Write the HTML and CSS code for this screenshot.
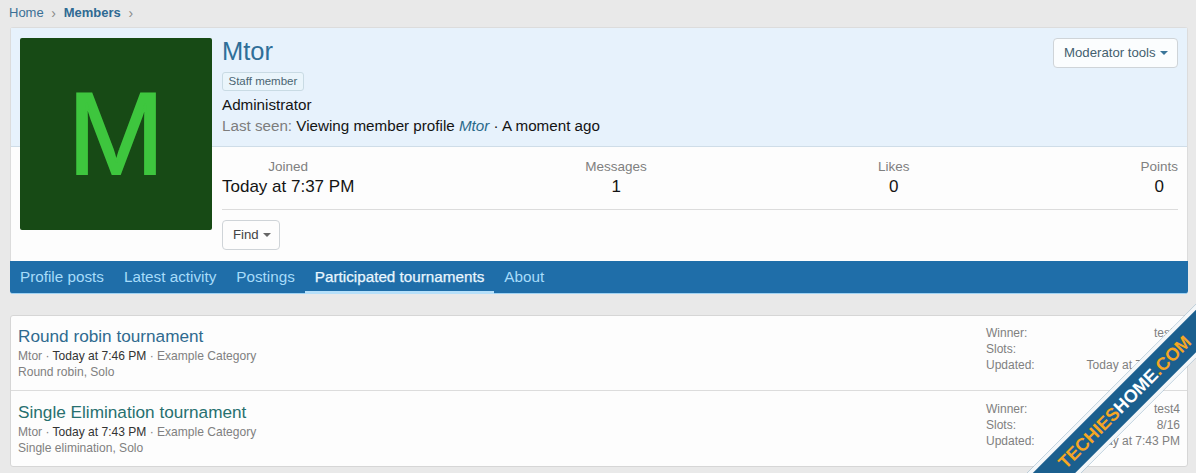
FILE: index.html
```html
<!DOCTYPE html>
<html lang="en">
<head>
<meta charset="utf-8">
<title>Mtor</title>
<link rel="stylesheet" href="styles.css">
</head>
<body>
<nav class="crumbs">
  <a class="crumb" href="#">Home</a><span class="sep">›</span>
  <a class="crumb current" href="#">Members</a><span class="sep">›</span>
</nav>

<section class="profile">
  <div class="avatar">M</div>
  <header class="banner">
    <div class="identity">
      <h1 class="name">Mtor</h1>
      <div class="badge-line"><span class="badge">Staff member</span></div>
      <div class="role">Administrator</div>
      <div class="seen"><span class="muted">Last seen:</span> Viewing member profile <a class="seen-link" href="#">Mtor</a> · A moment ago</div>
    </div>
    <button class="btn btn-mod">Moderator tools<span class="caret"></span></button>
  </header>
  <div class="details">
    <dl class="stats">
      <div class="stat"><dt>Joined</dt><dd>Today at 7:37 PM</dd></div>
      <div class="stat"><dt>Messages</dt><dd>1</dd></div>
      <div class="stat"><dt>Likes</dt><dd>0</dd></div>
      <div class="stat"><dt>Points</dt><dd>0</dd></div>
    </dl>
    <div class="actions"><button class="btn btn-find">Find<span class="caret"></span></button></div>
  </div>
  <div class="tabs">
    <a class="tab" href="#">Profile posts</a>
    <a class="tab" href="#">Latest activity</a>
    <a class="tab" href="#">Postings</a>
    <a class="tab active" href="#">Participated tournaments</a>
    <a class="tab" href="#">About</a>
  </div>
</section>

<section class="list">
  <article class="row">
    <div class="main">
      <h2 class="title">Round robin tournament</h2>
      <div class="meta">Mtor · <span class="dark">Today at 7:46 PM</span> · Example Category</div>
      <div class="meta">Round robin, Solo</div>
    </div>
    <dl class="facts">
      <div class="fact"><dt>Winner:</dt><dd>test4</dd></div>
      <div class="fact"><dt>Slots:</dt><dd>4/8</dd></div>
      <div class="fact"><dt>Updated:</dt><dd>Today at 7:46 PM</dd></div>
    </dl>
  </article>
  <article class="row">
    <div class="main">
      <h2 class="title title-alt">Single Elimination tournament</h2>
      <div class="meta">Mtor · <span class="dark">Today at 7:43 PM</span> · Example Category</div>
      <div class="meta">Single elimination, Solo</div>
    </div>
    <dl class="facts">
      <div class="fact"><dt>Winner:</dt><dd>test4</dd></div>
      <div class="fact"><dt>Slots:</dt><dd>8/16</dd></div>
      <div class="fact"><dt>Updated:</dt><dd>Today at 7:43 PM</dd></div>
    </dl>
  </article>
</section>

<div class="overlay">
  <div class="ribbon"><span class="orange">TECHIES</span><span class="white">HOME</span><span class="orange">.COM</span></div>
</div>
</body>
</html>
```

FILE: styles.css
```css
* { box-sizing: border-box; }
html, body { height: 100%; }
html { overflow: hidden; }
body {
  margin: 0;
  padding: 0 8px 0 10px;
  background: #e9e9e9;
  font-family: "Liberation Sans", Arial, sans-serif;
  font-size: 15.2px;
  color: #141414;
  overflow: hidden;
  position: relative;
}
a { text-decoration: none; color: inherit; }
h1, h2, dl, dd { margin: 0; }

.crumbs {
  height: 27px;
  display: flex;
  align-items: center;
  font-size: 13px;
  color: #3b6f95;
  margin-left: -1px;
  padding-bottom: 2px;
}
.crumb.current { font-weight: bold; color: #2f6a93; }
.sep { color: #8a8a8a; margin: 0 7px; font-size: 14px; width: 6px; text-align: center; }

.profile {
  position: relative;
  height: 267px;
  display: flex;
  flex-direction: column;
  background: #fdfdfd;
  border: 1px solid #dcdcdc;
  border-bottom: none;
  border-radius: 3px;
}
.avatar {
  position: absolute;
  left: 9px;
  top: 10px;
  width: 192px;
  height: 192px;
  background: #174a15;
  color: #3ec63e;
  border-radius: 2px;
  display: flex;
  align-items: center;
  justify-content: center;
  font-size: 116px;
  line-height: 1;
  -webkit-text-stroke: 2px #3ec63e;
}
.banner {
  height: 119px;
  padding: 10px 9px 0 211px;
  background: #e7f2fc;
  border-bottom: 1px solid #cfdde8;
  display: flex;
  justify-content: space-between;
  align-items: flex-start;
}
.name {
  font-size: 25.5px;
  font-weight: normal;
  line-height: 26px;
  color: #2f6f99;
}
.badge-line { margin-top: 8px; height: 19px; display: flex; }
.badge {
  font-size: 11.5px;
  line-height: 17px;
  padding: 0 5.5px;
  color: #4a6572;
  background: #eaf5fb;
  border: 1px solid #c9dbe4;
  border-radius: 3px;
}
.role { margin-top: 3px; line-height: 21px; }
.seen { line-height: 21px; }
.muted { color: #7d7d7d; }
.seen-link { font-style: italic; color: #2b6a8b; }

.btn {
  display: inline-flex;
  align-items: center;
  font: inherit;
  font-size: 13.2px;
  height: 30px;
  padding: 0 10px 2px;
  color: #43606e;
  background: #fbfdfe;
  border: 1px solid #cfd4d8;
  border-radius: 4px;
  white-space: nowrap;
}
.btn-mod { width: 125px; }
.btn-find { width: 58px; height: 30px; color: #444; background: #fdfdfd; }
.caret {
  width: 0;
  height: 0;
  margin-left: 4px;
  margin-top: 1px;
  border-left: 4px solid transparent;
  border-right: 4px solid transparent;
  border-top: 4px solid #3a7599;
}
.btn-find .caret { border-top-color: #666; }

.details {
  height: 114px;
  padding: 10px 9px 0 211px;
}
.stats {
  height: 53px;
  display: flex;
  justify-content: space-between;
  border-bottom: 1px solid #dcdcdc;
  text-align: center;
}
.stat dt { font-size: 13.5px; line-height: 19px; color: #808080; }
.stat dd { font-size: 17px; line-height: 22px; color: #141414; }
.actions { margin-top: 10px; }

.tabs {
  height: 33px;
  margin: 0 -1px;
  display: flex;
  background: #1f6ea9;
  border-bottom: 1px solid #9fd2f3;
  border-radius: 0 0 3px 3px;
}
.tab {
  height: 33px;
  padding: 0 10px;
  line-height: 31px;
  font-size: 15.25px;
  color: #a7dcfa;
}
.active {
  color: #e9f6fe;
  font-weight: normal;
  border-bottom: 3px solid #b6e0fa;
  -webkit-text-stroke: 0.25px #e9f6fe;
}

.list {
  margin-top: 21px;
  height: 152px;
  background: #fdfdfd;
  border: 1px solid #d6d6d6;
  border-radius: 3px;
}
.row {
  height: 74px;
  padding: 10px 7px 0 7px;
  display: flex;
  justify-content: space-between;
}
.row + .row { border-top: 1px solid #dcdcdc; height: 75px; padding-top: 11px; }
.title {
  font-size: 17.2px;
  font-weight: normal;
  line-height: 20px;
  color: #2f6a8f;
}
.title-alt { color: #27706f; }
.meta {
  font-size: 12.05px;
  line-height: 16px;
  color: #808080;
}
.row .meta:nth-child(2) { margin-top: 2px; }
.dark { color: #333; }
.facts {
  width: 194px;
  margin-top: -1px;
  font-size: 12px;
  line-height: 16px;
  color: #808080;
}
.fact { display: flex; justify-content: space-between; }

.overlay {
  position: absolute;
  inset: 0;
  overflow: hidden;
  pointer-events: none;
}
.ribbon {
  position: absolute;
  left: 971px;
  top: 387px;
  width: 300px;
  height: 38px;
  transform: rotate(-45deg);
  background: #1b5f8e;
  border-top: 4px solid #f4f7f9;
  border-bottom: 4px solid #f4f7f9;
  font-size: 18px;
  font-weight: bold;
  line-height: 30px;
  padding-left: 66px;
  white-space: nowrap;
}
.orange { color: #f5a623; }
.white { color: #ffffff; }
```
